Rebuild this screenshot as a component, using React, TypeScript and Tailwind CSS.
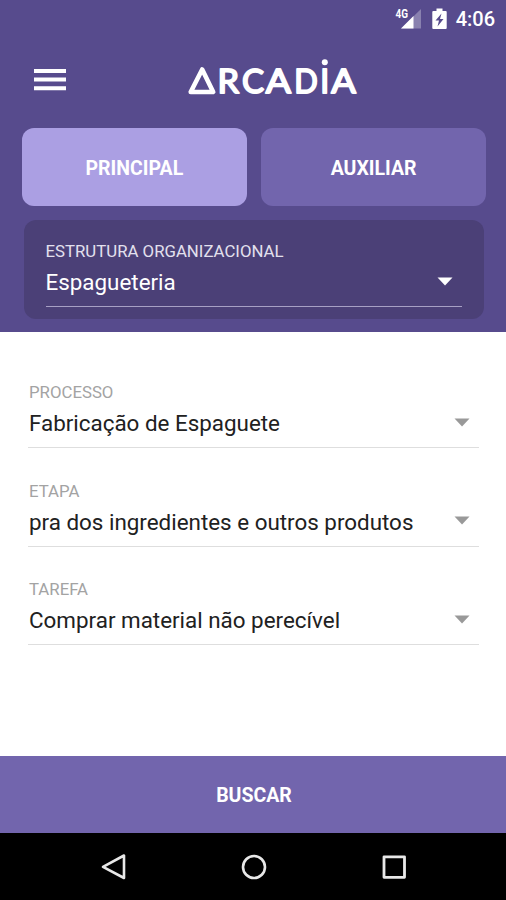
import clsx from "clsx"

interface SelectFieldProps {
    label: string
    value: string
    dark?: boolean
}

const fields = [
    { label: "PROCESSO", value: "Fabricação de Espaguete" },
    { label: "ETAPA", value: "pra dos ingredientes e outros produtos" },
    { label: "TAREFA", value: "Comprar material não perecível" },
]

const logoLetters = [
    { char: "R", x: 30.6, width: 21.5 },
    { char: "C", x: 55, width: 22 },
    { char: "A", x: 78.8, width: 25.2 },
    { char: "D", x: 107.2, width: 23.5 },
    { char: "I", x: 133.2, width: 8.9 },
    { char: "A", x: 144.2, width: 24.6 },
]

function StatusBar() {
    return (
        <div className="flex h-[38px] items-center justify-end pr-[11px] text-white">
            <svg width="28" height="24" viewBox="0 0 28 24" className="mr-[10px]">
                <text x="1.5" y="10.5" fontSize="12" fontWeight="700" fill="white" textLength="12.5" lengthAdjust="spacingAndGlyphs">4G</text>
                <path d="M27 2V21.5H7Z" fill="white" fillOpacity="0.3" />
                <path d="M19.5 9V21.5H7Z" fill="white" />
            </svg>
            <svg width="15" height="22" viewBox="0 0 15 22" className="mr-[9px]">
                <path d="M4.5 0.5h6v2.5h3.2q1 0 1 1v16q0 1-1 1H1.3q-1 0-1-1V4q0-1 1-1h3.2z" fill="white" />
                <path d="M9.5 5.5L3.5 12.5H7L5.5 18.5L11.5 11H8Z" fill="#574b8d" />
            </svg>
            <span className="text-[20px] font-medium leading-none">4:06</span>
        </div>
    )
}

function Logo() {
    return (
        <svg width="176" height="44" viewBox="0 0 176 44" fill="white" stroke="white" strokeLinejoin="round" className="overflow-visible">
            <path d="M15.2 14.5L26.2 37H3.7Z" fill="none" strokeWidth="4.6" />
            {logoLetters.map((letter) => (
                <text
                    key={letter.x}
                    x={letter.x}
                    y="38.4"
                    fontSize="32.3"
                    strokeWidth="1.8"
                    textLength={letter.width}
                    lengthAdjust="spacingAndGlyphs"
                    className="font-['Lato',sans-serif]"
                >
                    {letter.char}
                </text>
            ))}
            <circle cx="137.8" cy="7.2" r="3" stroke="none" />
        </svg>
    )
}

function SelectField({ label, value, dark }: SelectFieldProps) {
    return (
        <div className={clsx("flex h-[66px] flex-col border-b", dark ? "border-[#a7a0c4] text-white" : "border-[#dedede] text-[#212121]")}>
            <span className={clsx("text-[16.8px] leading-5", dark ? "text-[#e3e0ee]" : "pl-px text-[#a3a3a3]")}>{label}</span>
            <div className={clsx("flex items-center justify-between pt-[5px]", !dark && "pl-px")}>
                <span className="whitespace-nowrap text-[22.4px] leading-[32px]">{value}</span>
                <svg width="16" height="9" viewBox="0 0 16 9" className={clsx("mb-[2px]", dark ? "mr-[9px] text-white" : "mr-[9.5px] text-[#999999]")}>
                    <path d="M0.5 0.5H15.5L8 8.5Z" fill="currentColor" />
                </svg>
            </div>
        </div>
    )
}

export default function App() {
    return (
        <div className="flex h-[900px] w-[506px] flex-col overflow-hidden bg-white font-['Roboto',sans-serif]">
            <header className="h-[332px] shrink-0 bg-[#574b8d]">
                <StatusBar />
                <div className="flex h-[90px] items-start pl-[34px] pt-[17px]">
                    <svg width="32" height="24" viewBox="0 0 32 24" className="mt-[13px]">
                        <path d="M0 3H32M0 11.5H32M0 20.3H32" stroke="white" strokeWidth="4" />
                    </svg>
                    <div className="ml-[121px]">
                        <Logo />
                    </div>
                </div>
                <div className="flex gap-[14.5px] pl-[22px] pr-5">
                    <button className="h-[78px] flex-1 rounded-xl bg-[#ab9fe3] pt-[3px] text-[19.5px] font-bold text-white">PRINCIPAL</button>
                    <button className="h-[78px] flex-1 rounded-xl bg-[#7265ad] pt-[3px] text-[19.5px] font-bold text-white">AUXILIAR</button>
                </div>
                <div className="ml-6 mr-[22px] mt-[14px] h-[98.5px] rounded-xl bg-[#4b4077] pl-[21.5px] pr-[22px] pt-[21px]">
                    <SelectField label="ESTRUTURA ORGANIZACIONAL" value="Espagueteria" dark />
                </div>
            </header>
            <main className="flex flex-1 flex-col gap-[32.5px] pl-7 pr-[27px] pt-[50px]">
                {fields.map((field) => (
                    <SelectField key={field.label} label={field.label} value={field.value} />
                ))}
            </main>
            <button className="h-[77px] shrink-0 bg-[#7265ad] pt-[3px] pl-0.5 text-[19.5px] font-bold text-white">BUSCAR</button>
            <nav className="flex h-[67px] shrink-0 items-center justify-center gap-[112px] bg-black pl-px">
                <svg width="28" height="28" viewBox="0 0 28 28" fill="none" stroke="#e8e8e8" strokeWidth="2.6" strokeLinejoin="round">
                    <path d="M24 2.5V25L3 13.8Z" />
                </svg>
                <svg width="28" height="28" viewBox="0 0 28 28" fill="none" stroke="#e8e8e8" strokeWidth="2.6">
                    <circle cx="14" cy="14" r="11" />
                </svg>
                <svg width="28" height="28" viewBox="0 0 28 28" fill="none" stroke="#e8e8e8" strokeWidth="2.8" strokeLinejoin="round">
                    <rect x="4" y="3.8" width="20.5" height="20.5" />
                </svg>
            </nav>
        </div>
    )
}
